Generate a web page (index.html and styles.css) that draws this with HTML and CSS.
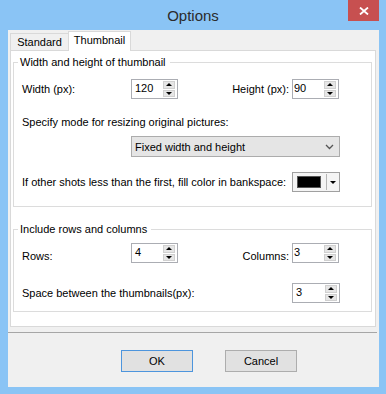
FILE: index.html
```html
<!DOCTYPE html>
<html>
<head>
<meta charset="utf-8">
<link rel="stylesheet" href="styles.css">
</head>
<body>
<div class="window">
  <div class="titlebar">
    <span></span>
    <span class="title">Options</span>
    <div class="close-wrap">
      <div class="close">
        <svg width="10" height="8" viewBox="0 0 10 8"><path d="M1 0.5 L9 7.5 M9 0.5 L1 7.5" stroke="#fff" stroke-width="1.8" fill="none"/></svg>
      </div>
    </div>
  </div>
  <div class="client">
    <div class="tabstrip">
      <div class="tab">Standard</div>
      <div class="tab active">Thumbnail</div>
    </div>
    <div class="panel">
      <fieldset class="group g1">
        <legend>Width and height of thumbnail</legend>
        <div class="row row-size">
          <span class="lbl-left">Width (px):</span>
          <div class="spin"><span class="val">120</span><div class="btns"><div class="sb"><i class="up"></i></div><div class="sb"><i class="dn"></i></div></div></div>
          <span class="lbl-right">Height (px):</span>
          <div class="spin narrow"><span class="val">90</span><div class="btns"><div class="sb"><i class="up"></i></div><div class="sb"><i class="dn"></i></div></div></div>
        </div>
        <div class="text-line mode">Specify mode for resizing original pictures:</div>
        <div class="select-row">
          <div class="select">
            <span>Fixed width and height</span>
            <svg width="9" height="6" viewBox="0 0 9 6"><path d="M1 1 L4.5 4.5 L8 1" stroke="#555" stroke-width="1.3" fill="none"/></svg>
          </div>
        </div>
        <div class="row row-fill">
          <span class="fill-lbl">If other shots less than the first, fill color in bankspace:</span>
          <div class="colorpick">
            <div class="swatch"></div>
            <div class="cp-sep"></div>
            <i class="dn cp-arrow"></i>
          </div>
        </div>
      </fieldset>
      <fieldset class="group g2">
        <legend>Include rows and columns</legend>
        <div class="row row-rc">
          <span class="lbl-left low">Rows:</span>
          <div class="spin"><span class="val">4</span><div class="btns"><div class="sb"><i class="up"></i></div><div class="sb"><i class="dn"></i></div></div></div>
          <span class="lbl-right low">Columns:</span>
          <div class="spin narrow"><span class="val">3</span><div class="btns"><div class="sb"><i class="up"></i></div><div class="sb"><i class="dn"></i></div></div></div>
        </div>
        <div class="row row-space">
          <span class="space-lbl">Space between the thumbnails(px):</span>
          <div class="spin wide"><span class="val">3</span><div class="btns"><div class="sb"><i class="up"></i></div><div class="sb"><i class="dn"></i></div></div></div>
        </div>
      </fieldset>
    </div>
    <div class="sep"></div>
    <div class="buttons">
      <div class="btn default">OK</div>
      <div class="btn">Cancel</div>
    </div>
  </div>
</div>
</body>
</html>
```
FILE: styles.css
```css
* { box-sizing: border-box; }
html, body { margin: 0; padding: 0; }
body {
  width: 386px;
  height: 394px;
  overflow: hidden;
  font-family: "Liberation Sans", Arial, sans-serif;
  font-size: 11px;
  color: #000;
}
.window {
  width: 386px;
  height: 394px;
  background: #8ac4f5;
  display: flex;
  flex-direction: column;
}
.titlebar {
  height: 30px;
  display: grid;
  grid-template-columns: 1fr auto 1fr;
}
.title {
  font-size: 15px;
  line-height: 31px;
  color: #2b2b2b;
}
.close-wrap {
  display: flex;
  justify-content: flex-end;
  align-items: flex-start;
  padding-right: 7px;
}
.close {
  width: 31px;
  height: 21px;
  background: #c75050;
  display: flex;
  align-items: center;
  justify-content: center;
  padding-top: 1px;
}
.close svg { display: block; }
.client {
  margin: 0 7px 7px 8px;
  flex: 1;
  background: #f0f0f0;
  padding: 1px 3px 0 2px;
  display: flex;
  flex-direction: column;
}
.tabstrip {
  height: 19px;
  display: flex;
  align-items: flex-end;
  position: relative;
  z-index: 1;
}
.tab {
  height: 17px;
  padding: 0 4px;
  width: 58px;
  border: 1px solid #d9d9d9;
  border-bottom: none;
  border-right: none;
  background: #f0f0f0;
  line-height: 17px;
  text-align: center;
}
.tab.active {
  width: 63px;
  height: 20px;
  margin-bottom: -1px;
  background: #fff;
  border-right: 1px solid #d9d9d9;
  line-height: 17px;
}
.panel {
  height: 277px;
  background: #fff;
  border: 1px solid #d9d9d9;
  padding: 3px 3px 0 2px;
}
.group {
  margin: 0;
  border: 1px solid #dcdcdc;
  padding: 0 31px 0 8px;
  min-width: 0;
}
.group legend {
  padding: 0 4px 0 2px;
  margin-left: -4px;
  line-height: 16px;
  height: 16px;
}
.g1 { padding-bottom: 14px; }
.g2 { margin-top: 14px; padding-bottom: 8px; }
.row {
  display: flex;
  align-items: center;
  height: 20px;
}
.row-size { margin-top: 9px; }
.row-rc { margin-top: 6px; }
.row-space { margin-top: 20px; }
.row-fill { margin-top: 15px; }
.lbl-left { width: 109px; }
.lbl-right { flex: 1; text-align: right; padding-right: 3px; }
.low { padding-top: 6px; }
.space-lbl { flex: 1; }
.fill-lbl { flex: 1; white-space: nowrap; }
.text-line { line-height: 16px; }
.mode { margin-top: 15px; }
.select-row { margin-top: 6px; padding-left: 109px; }
.spin {
  width: 47px;
  height: 20px;
  border: 1px solid #abadb3;
  background: #fff;
  display: flex;
  align-items: stretch;
}
.spin.narrow { width: 47px; margin-right: 1px; }
.spin.wide { width: 48px; }
.val { flex: 1; padding-left: 3px; line-height: 17px; }
.narrow .val { padding-left: 1px; }
.btns {
  width: 12px;
  margin: 1px 2px 1px 0;
  display: flex;
  flex-direction: column;
  gap: 1px;
}
.sb {
  flex: 1;
  background: #e6e6e6;
  border: 1px solid #d0d0d0;
  display: flex;
  align-items: center;
  justify-content: center;
}
.up, .dn {
  display: block;
  width: 0;
  height: 0;
  border-left: 3px solid transparent;
  border-right: 3px solid transparent;
}
.up { border-bottom: 3px solid #000; }
.dn { border-top: 3px solid #000; }
.select {
  height: 21px;
  border: 1px solid #acacac;
  background: #e5e5e5;
  display: flex;
  align-items: center;
  justify-content: space-between;
  padding: 0 5px 0 3px;
}
.select svg { display: block; }
.colorpick {
  width: 48px;
  height: 20px;
  border: 1px solid #a0a0a0;
  background: #f4f4f4;
  display: flex;
  align-items: center;
  padding: 0 3px 0 4px;
}
.swatch {
  width: 27px;
  height: 12px;
  background: #000;
  border: 1px solid #555;
}
.cp-sep {
  width: 1px;
  height: 16px;
  background: #b5b5b5;
  margin-left: 5px;
}
.cp-arrow { margin-left: 3px; }
.sep {
  margin-top: 5px;
  height: 1px;
  background: #a6a6a6;
  margin-left: -2px;
  margin-right: -1px;
}
.buttons {
  display: flex;
  gap: 32px;
  padding-left: 111px;
  margin-top: 17px;
}
.btn {
  width: 72px;
  height: 22px;
  border: 1px solid #adadad;
  background: #e1e1e1;
  text-align: center;
  line-height: 20px;
}
.btn.default { border-color: #4d95dd; }
```
